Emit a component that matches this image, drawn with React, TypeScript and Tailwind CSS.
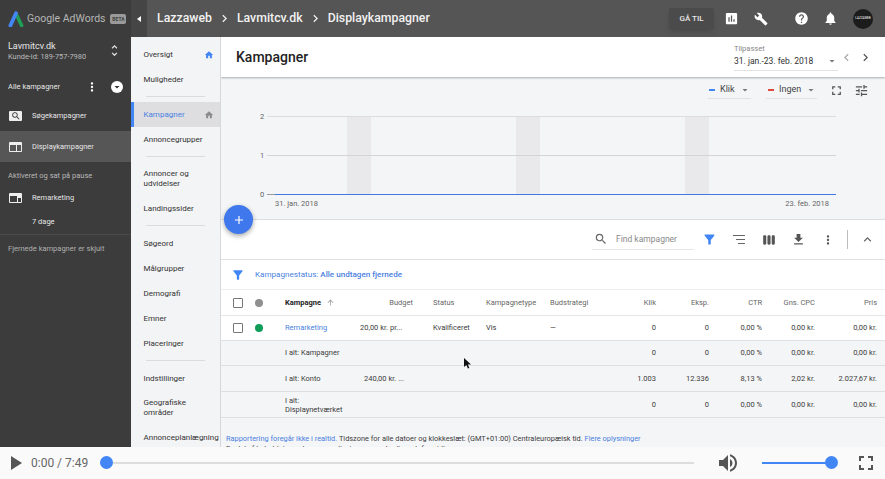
import {
  MdAdd,
  MdArrowDropDown,
  MdArrowUpward,
  MdAssessment,
  MdBuild,
  MdChevronLeft,
  MdChevronRight,
  MdExpandLess,
  MdFileDownload,
  MdFilterAlt,
  MdFullscreen,
  MdHelp,
  MdHome,
  MdMoreVert,
  MdNotifications,
  MdPlayArrow,
  MdSearch,
  MdTune,
  MdUnfoldMore,
  MdViewWeek,
  MdVolumeUp,
} from "react-icons/md";

const cols = "grid grid-cols-[34px_30px_65px_63px_73px_64px_70px_36px_53px_53px_53px_62px]";

function AdsLogo() {
  return (
    <svg viewBox="0 0 16 16" className="h-[16px] w-[16px]">
      <path d="M8.4 3.5 13.6 14.5" stroke="#1e9e57" strokeWidth="3.6" strokeLinecap="round" fill="none" />
      <path d="M2.4 14.5 8 2.2" stroke="#4285f4" strokeWidth="3.8" strokeLinecap="round" fill="none" />
    </svg>
  );
}

function SearchCampaignIcon() {
  return (
    <div className="flex h-[10px] w-[13px] items-center justify-center rounded-[1px] bg-[#eeeeee]">
      <MdSearch className="text-[10px] text-[#333]" />
    </div>
  );
}

function DisplayIcon({ alt }: { alt?: boolean }) {
  const pane = alt ? "#3c3c3c" : "#565656";
  return (
    <svg viewBox="0 0 13 10" className="h-[10px] w-[13px]">
      <rect width="13" height="10" rx="1" fill="#eeeeee" />
      <rect x="1" y="3" width={alt ? 7 : 6} height="6" fill={pane} />
      <rect x={alt ? 9 : 8} y={alt ? 5 : 3} width={alt ? 3 : 4} height={alt ? 4 : 6} fill={pane} />
    </svg>
  );
}

function SortLines() {
  return (
    <svg viewBox="0 0 12 9" className="h-[9px] w-[12px]" fill="#666">
      <rect width="12" height="1" />
      <rect x="3" y="4" width="9" height="1" />
      <rect x="5" y="8" width="7" height="1" />
    </svg>
  );
}

function Sidebar() {
  return (
    <aside className="flex w-[131px] shrink-0 flex-col bg-[#3c3c3c] text-[#e6e6e6]">
      <div className="flex h-[37px] items-center pl-[8px]">
        <AdsLogo />
        <span className="ml-[3px] text-[10.5px] whitespace-nowrap text-[#b5b5b5]">Google AdWords</span>
        <span className="ml-[5px] w-[16px] rounded-[2px] bg-[#9a9a9a] text-center text-[5px] leading-[10px] font-bold text-[#444]">BETA</span>
      </div>
      <div className="mt-[2px] flex h-[23px] items-center justify-between pr-[9px] pl-[8px]">
        <div>
          <div className="text-[9px] leading-[11px]">Lavmitcv.dk</div>
          <div className="text-[7.4px] leading-[9px] text-[#bdbdbd]">Kunde-id: 189-757-7980</div>
        </div>
        <MdUnfoldMore className="text-[15px] text-[#ddd]" />
      </div>
      <div className="mt-[13px] flex h-[24px] items-center pr-[8px] pl-[8px]">
        <span className="flex-1 text-[7.5px]">Alle kampagner</span>
        <MdMoreVert className="mr-[12px] text-[14px] text-white" />
        <span className="flex h-[12px] w-[12px] items-center justify-center rounded-full bg-white">
          <MdArrowDropDown className="text-[12px] text-[#333]" />
        </span>
      </div>
      <div className="mt-[2px] flex h-[30px] items-center gap-[10px] pl-[9px] text-[7.5px]">
        <SearchCampaignIcon />
        <span>Søgekampagner</span>
      </div>
      <div className="flex h-[31px] items-center gap-[10px] bg-[#565656] pl-[9px] text-[7.5px]">
        <DisplayIcon />
        <span>Displaykampagner</span>
      </div>
      <div className="mt-[8px] pl-[8px] text-[7.5px] leading-[12px] text-[#b8b8b8]">Aktiveret og sat på pause</div>
      <div className="mt-[4px] flex h-[24px] items-center gap-[10px] pl-[9px] text-[7.5px]">
        <DisplayIcon alt />
        <span>Remarketing</span>
      </div>
      <div className="flex h-[25px] items-center border-b border-[#4a4a4a] pl-[32px] text-[7.5px]">7 dage</div>
      <div className="mt-[8px] pl-[8px] text-[7.5px] leading-[12px] text-[#b0b0b0]">Fjernede kampagner er skjult</div>
    </aside>
  );
}

function TopBar() {
  return (
    <header className="flex h-[37px] items-center bg-[#555555] text-white">
      <div className="flex h-full w-[16px] items-center justify-center bg-[#454545]">
        <span className="h-0 w-0 border-y-[3px] border-r-[4px] border-y-transparent border-r-white" />
      </div>
      <div className="ml-[10px] flex items-center text-[12.3px] font-medium text-[#f1f1f1]">
        <span>Lazzaweb</span>
        <MdChevronRight className="mx-[5px] text-[15px]" />
        <span>Lavmitcv.dk</span>
        <MdChevronRight className="mx-[5px] text-[15px]" />
        <span>Displaykampagner</span>
      </div>
      <div className="ml-auto flex items-center">
        <div className="flex h-[21px] w-[45px] items-center justify-center rounded-[2px] bg-[#4b4b4b] text-[8px] font-medium text-[#e8e8e8] shadow-md">GÅ TIL</div>
        <MdAssessment className="ml-[10px] text-[15px]" />
        <MdBuild className="ml-[15px] text-[14px]" />
        <MdHelp className="ml-[26px] text-[15px]" />
        <MdNotifications className="ml-[14px] text-[15px]" />
        <span className="mr-[12px] ml-[15px] flex h-[20px] w-[20px] items-center justify-center rounded-full bg-[#1c1c1c] text-[3px] text-white">LAZZAWEB</span>
      </div>
    </header>
  );
}

const navGroups = [
  [
    ["Oversigt", "blue"],
    ["Muligheder", ""],
  ],
  [
    ["Kampagner", "active"],
    ["Annoncegrupper", ""],
  ],
  [
    ["Annoncer og udvidelser", "wrap"],
    ["Landingssider", ""],
  ],
  [
    ["Søgeord", ""],
    ["Målgrupper", ""],
    ["Demografi", ""],
    ["Emner", ""],
    ["Placeringer", ""],
  ],
  [
    ["Indstillinger", ""],
    ["Geografiske områder", "wrap"],
    ["Annonceplanlægning", ""],
  ],
];

function SideNav() {
  return (
    <nav className="w-[89px] shrink-0 overflow-hidden bg-[#f3f4f6] pt-[5px] text-[8px] leading-[10px] text-[#333]">
      {navGroups.map((group, g) => (
        <div key={g} className={g > 0 ? "mt-[4px]" : ""}>
          {g > 0 && <div className="mx-[15px] mb-[5px] h-px bg-[#dcdcdc]" />}
          {group.map(([label, kind]) => (
            <div
              key={label}
              className={
                kind === "active"
                  ? "flex h-[25px] items-center border-l-[3px] border-[#4285f4] bg-[#dedee0] pr-[6px] pl-[9.5px] text-[#4a7fe0]"
                  : kind === "wrap"
                    ? "flex h-[34px] w-[80px] items-center pr-[2px] pl-[12.5px]"
                    : "flex h-[25px] items-center pr-[6px] pl-[12.5px] whitespace-nowrap"
              }
            >
              <span className="flex-1">{label}</span>
              {kind === "blue" && <MdHome className="text-[10px] text-[#4285f4]" />}
              {kind === "active" && <MdHome className="text-[10px] text-[#8c8c8c]" />}
            </div>
          ))}
        </div>
      ))}
    </nav>
  );
}

function Chart() {
  const bands = [347, 516, 685];
  return (
    <section className="relative h-[143px] border-b border-[#dedede] bg-[#f4f5f7]">
      <div className="flex h-[25px] items-center justify-end pt-[1px] pr-[16px] text-[9px] text-[#444]">
        <div className="flex h-[18px] w-[43px] items-center border-b border-[#e2e2e2] pl-[1px]">
          <span className="h-[2px] w-[6px] bg-[#4285f4]" />
          <span className="ml-[5px] flex-1">Klik</span>
          <MdArrowDropDown className="text-[12px] text-[#777]" />
        </div>
        <div className="ml-[15px] flex h-[18px] w-[51px] items-center border-b border-[#e2e2e2] pl-[2px]">
          <span className="h-[2px] w-[6px] bg-[#e04a3f]" />
          <span className="ml-[5px] flex-1">Ingen</span>
          <MdArrowDropDown className="text-[12px] text-[#777]" />
        </div>
        <MdFullscreen className="ml-[12px] text-[15px] text-[#555]" />
        <MdTune className="ml-[10px] text-[15px] text-[#555]" />
      </div>
      <svg viewBox="221 102 664 117" className="h-[117px] w-full">
        {bands.map((x) => (
          <rect key={x} x={x} y="116" width="24" height="78" fill="#e9e8ea" />
        ))}
        <line x1="267" x2="836" y1="116.5" y2="116.5" stroke="#dcdcdc" />
        <line x1="267" x2="836" y1="155.5" y2="155.5" stroke="#d4d4d4" />
        <line x1="267" x2="275" y1="194.5" y2="194.5" stroke="#999" />
        <line x1="275" x2="836" y1="194.5" y2="194.5" stroke="#4278e0" />
        <g fontFamily="Roboto, sans-serif" fontSize="7.5" fill="#666">
          <text x="260" y="119">2</text>
          <text x="260" y="158">1</text>
          <text x="260" y="197">0</text>
          <text x="275" y="206">31. jan. 2018</text>
          <text x="829" y="206" textAnchor="end">23. feb. 2018</text>
        </g>
      </svg>
      <button className="absolute top-[128px] left-[3px] flex h-[29px] w-[29px] items-center justify-center rounded-full bg-[#3f78ec] text-white shadow-[0_2px_5px_rgba(0,0,0,0.35)]">
        <MdAdd className="text-[14px]" />
      </button>
    </section>
  );
}

function Toolbar() {
  return (
    <section className="flex h-[40px] items-center justify-end border-b border-[#e2e2e2] bg-white pr-[10px] text-[#666]">
      <div className="flex h-[20px] w-[102px] items-center border-b border-[#e6e6e6] pl-[2px]">
        <MdSearch className="text-[14px] text-[#666]" />
        <span className="ml-[8px] text-[8.5px] text-[#8a8a8a]">Find kampagner</span>
      </div>
      <MdFilterAlt className="ml-[7.5px] text-[15px] text-[#4285f4]" />
      <div className="ml-[16.5px]">
        <SortLines />
      </div>
      <MdViewWeek className="ml-[16.5px] text-[14px] text-[#555]" />
      <MdFileDownload className="ml-[15px] text-[15px] text-[#555]" />
      <MdMoreVert className="ml-[15px] text-[14px] text-[#555]" />
      <div className="ml-[12.5px] h-[19px] w-px bg-[#bdbdbd]" />
      <MdExpandLess className="ml-[12px] text-[15px] text-[#666]" />
    </section>
  );
}

function FilterRow() {
  return (
    <section className="flex h-[30px] items-center border-b border-[#eeeeee] bg-white pl-[10px] text-[8.1px]">
      <MdFilterAlt className="text-[14px] text-[#4285f4]" />
      <span className="ml-[10px] text-[#4a7fe0]">Kampagnestatus: <b className="font-medium">Alle undtagen fjernede</b></span>
    </section>
  );
}

function Checkbox() {
  return <span className="ml-[12px] block h-[10px] w-[10px] rounded-[1px] border border-[#777] bg-white" />;
}

const totals = [
  { name: "I alt: Kampagner", budget: "", values: ["0", "0", "0,00 %", "0,00 kr.", "0,00 kr."], h: "h-[25px]" },
  { name: "I alt: Konto", budget: "240,00 kr. ...", values: ["1.003", "12.336", "8,13 %", "2,02 kr.", "2.027,67 kr."], h: "h-[26px]" },
  { name: "I alt: Displaynetværket", budget: "", values: ["0", "0", "0,00 %", "0,00 kr.", "0,00 kr."], h: "h-[26px]" },
];

function CampaignTable() {
  return (
    <section className="text-[7.5px] text-[#3c3c3c]">
      <div className={`${cols} h-[26px] items-center border-b border-[#e6e6e6] bg-white text-[#666]`}>
        <Checkbox />
        <span className="h-[8px] w-[8px] rounded-full bg-[#8f8f8f]" />
        <span className="flex items-center font-bold text-[#222]">Kampagne<MdArrowUpward className="ml-[5px] text-[9px] text-[#999]" /></span>
        <span className="text-right">Budget</span>
        <span className="pl-[20px]">Status</span>
        <span>Kampagnetype</span>
        <span>Budstrategi</span>
        <span className="text-right">Klik</span>
        <span className="text-right">Eksp.</span>
        <span className="text-right">CTR</span>
        <span className="text-right">Gns. CPC</span>
        <span className="text-right">Pris</span>
      </div>
      <div className={`${cols} h-[25px] items-center border-b border-[#e0e0e0] bg-white`}>
        <Checkbox />
        <span className="h-[8px] w-[8px] rounded-full bg-[#0f9d58]" />
        <span className="text-[#4a7fe0]">Remarketing</span>
        <span className="pl-[10px] whitespace-nowrap">20,00 kr. pr...</span>
        <span className="pl-[20px]">Kvalificeret</span>
        <span>Vis</span>
        <span>—</span>
        <span className="text-right">0</span>
        <span className="text-right">0</span>
        <span className="text-right">0,00 %</span>
        <span className="text-right">0,00 kr.</span>
        <span className="text-right">0,00 kr.</span>
      </div>
      {totals.map((row) => (
        <div key={row.name} className={`${cols} ${row.h} items-center border-b border-[#dfdfdf]`}>
          <span className="col-span-2" />
          <span className={row.name.length > 20 ? "w-[60px] leading-[9px]" : "whitespace-nowrap"}>{row.name}</span>
          <span className="pl-[14px] whitespace-nowrap">{row.budget}</span>
          <span className="col-span-3" />
          {row.values.map((v, i) => (
            <span key={i} className="text-right whitespace-nowrap">{v}</span>
          ))}
        </div>
      ))}
    </section>
  );
}

function PlayerBar() {
  return (
    <footer className="flex h-[32px] shrink-0 items-center bg-[#fafafa]">
      <MdPlayArrow className="ml-[3px] text-[24px] text-[#555]" />
      <span className="ml-[4px] text-[12px] text-[#666]">0:00 / 7:49</span>
      <div className="relative ml-[12px] h-[2px] w-[594px] bg-[#dddddd]">
        <span className="absolute top-[-6px] left-0 h-[13px] w-[13px] rounded-full bg-[#4285f4]" />
      </div>
      <MdVolumeUp className="ml-[22px] text-[24px] text-[#555]" />
      <div className="relative ml-[22px] h-[2px] w-[70px] bg-[#4285f4]">
        <span className="absolute top-[-6px] right-[-6px] h-[13px] w-[13px] rounded-full bg-[#4285f4]" />
      </div>
      <MdFullscreen className="ml-[22px] text-[24px] text-[#555]" />
    </footer>
  );
}

export default function App() {
  return (
    <div className="flex h-[479px] w-[885px] flex-col overflow-hidden bg-[#fafafa] font-['Roboto',sans-serif]">
      <div className="flex h-[447px] shrink-0">
        <Sidebar />
        <div className="flex min-w-0 flex-1 flex-col">
          <TopBar />
          <div className="flex min-h-0 flex-1">
            <SideNav />
            <main className="relative min-w-0 flex-1 overflow-hidden border-l border-[#d8d8d8] bg-[#f4f5f7]">
              <section className="relative z-10 flex h-[40px] items-center justify-between bg-white pr-[12px] pl-[15px] shadow-[0_1px_2px_rgba(0,0,0,0.3)]">
                <h1 className="text-[14px] font-medium text-[#222]">Kampagner</h1>
                <div className="flex items-center">
                  <div className="w-[104px] border-b border-[#e2e2e2] pb-[2px]">
                    <div className="text-[7.5px] leading-[10px] text-[#888]">Tilpasset</div>
                    <div className="flex items-center justify-between text-[8.5px] leading-[14px] text-[#333]">
                      <span>31. jan.-23. feb. 2018</span>
                      <MdArrowDropDown className="text-[12px] text-[#777]" />
                    </div>
                  </div>
                  <MdChevronLeft className="ml-[1px] text-[15px] text-[#aaa]" />
                  <MdChevronRight className="ml-[4px] text-[15px] text-[#555]" />
                </div>
              </section>
              <Chart />
              <Toolbar />
              <FilterRow />
              <CampaignTable />
              <div className="mt-[16px] pl-[5px] text-[7.4px] leading-[10px] whitespace-nowrap text-[#3c3c3c]">
                <div><span className="text-[#4a7fe0]">Rapportering foregår ikke i realtid.</span> Tidszone for alle datoer og klokkeslæt: (GMT+01:00) Centraleuropæisk tid. <span className="text-[#4a7fe0]">Flere oplysninger</span></div>
                <div>En del af beholdningen leveres muligvis gennem tredjepartsformidlere.</div>
              </div>
              <svg viewBox="0 0 8 11" className="absolute top-[321px] left-[243px] h-[11px] w-[8px]">
                <path d="M0 0v9l2.3-2 1.6 3.6 1.5-.7L3.8 6.4H7z" fill="#111" />
              </svg>
            </main>
          </div>
        </div>
      </div>
      <PlayerBar />
    </div>
  );
}
